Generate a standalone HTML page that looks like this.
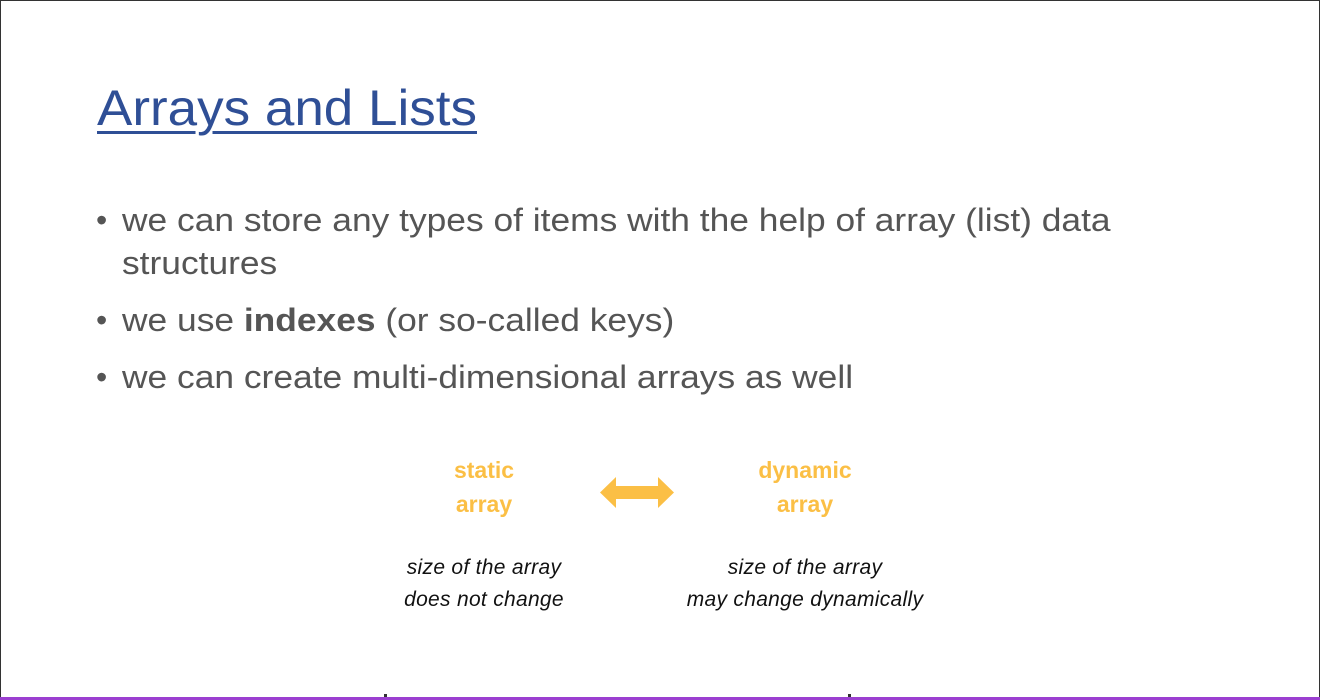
<!DOCTYPE html>
<html><head><style>
html,body{margin:0;padding:0;}
body{width:1320px;height:700px;position:relative;overflow:hidden;background:#fff;font-family:"Liberation Sans",sans-serif;}
.frame{position:absolute;left:0;top:0;width:1318px;height:696px;border:1px solid #333;border-bottom:none;}
.bot{position:absolute;left:0;top:697px;width:1320px;height:3px;background:#9b3fd0;}
.tick{position:absolute;top:694px;width:3px;height:4px;background:#333;}
h1{position:absolute;left:97px;top:79px;margin:0;font-weight:normal;font-size:50px;color:#2f4f96;text-decoration:underline;text-decoration-thickness:3px;text-underline-offset:6px;white-space:nowrap;transform:scaleX(1.06);transform-origin:0 0;}
.b{position:absolute;left:96px;font-size:32px;color:#555;white-space:nowrap;line-height:43px;}
.b span.d{position:absolute;left:0;}
.b div{margin-left:26px;transform:scaleX(1.105);transform-origin:0 0;}
.y{position:absolute;font-weight:bold;color:#fbbf45;font-size:23px;text-align:center;line-height:34px;}
.i{position:absolute;font-style:italic;color:#111;font-size:21px;text-align:center;line-height:32px;white-space:nowrap;letter-spacing:0.3px;}
</style></head><body>
<div class="frame"></div>
<h1>Arrays and Lists</h1>
<div class="b" style="top:199px"><span class="d">•</span><div>we can store any types of items with the help of array (list) data<br>structures</div></div>
<div class="b" style="top:299px"><span class="d">•</span><div>we use <b>indexes</b> (or so-called keys)</div></div>
<div class="b" style="top:356px"><span class="d">•</span><div>we can create multi-dimensional arrays as well</div></div>
<div class="y" style="left:424px;width:120px;top:453px">static<br>array</div>
<div class="y" style="left:735px;width:140px;top:453px">dynamic<br>array</div>
<svg style="position:absolute;left:599px;top:476px" width="76" height="33" viewBox="0 0 76 33"><path d="M1 16.5 L17 1 L17 10 L59 10 L59 1 L75 16.5 L59 32 L59 23 L17 23 L17 32 Z" fill="#fbbf45"/></svg>
<div class="i" style="left:384px;width:200px;top:552px">size of the array<br>does not change</div>
<div class="i" style="left:655px;width:300px;top:552px">size of the array<br>may change dynamically</div>
<div class="tick" style="left:384px"></div>
<div class="tick" style="left:848px"></div>
<div class="bot"></div>
</body></html>
